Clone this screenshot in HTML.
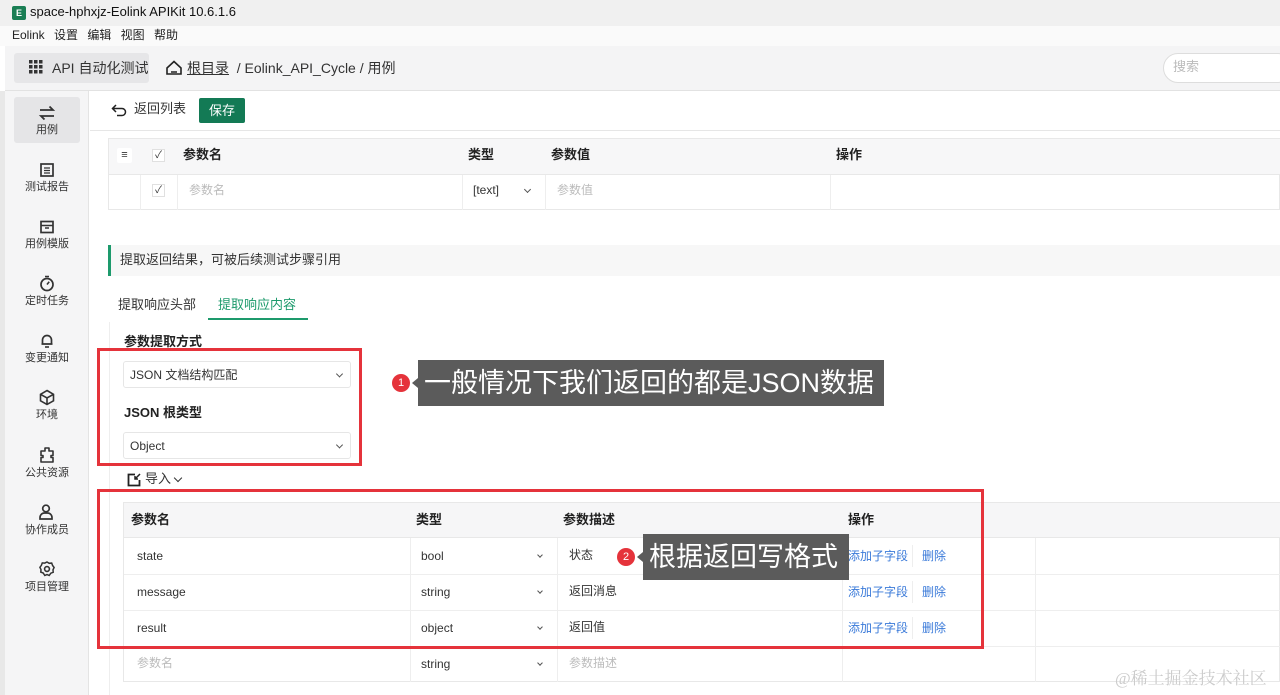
<!DOCTYPE html>
<html><head><meta charset="utf-8"><style>
*{box-sizing:border-box;margin:0;padding:0}
body{width:1280px;height:695px;overflow:hidden;font-family:"Liberation Sans","Noto Sans CJK SC",sans-serif;font-size:12px;color:#333;background:#fff;position:relative}
.a{position:absolute}
.t{white-space:nowrap;line-height:1.15}
.sel{position:absolute;border:1px solid #e6e6e6;border-radius:3px;background:#fff;font-size:12px;color:#333;padding-left:6px;display:flex;align-items:center}
.chev{position:absolute;right:8px;top:50%;width:5px;height:5px;border-right:1.2px solid #555;border-bottom:1.2px solid #555;transform:translateY(-70%) rotate(45deg)}
.nav{position:absolute;left:14px;width:66px;text-align:center;font-size:11px;color:#333;line-height:1.2}
.nav svg{display:block;margin:0 auto 3px}
.link{color:#3a7ad9}
</style></head><body>
<div class="a" style="left:0;top:0;width:1280px;height:26px;background:#f0f0f0"></div>
<div class="a" style="left:12px;top:6px;width:14px;height:14px;background:#1a7e54;border-radius:2px;color:#fff;font-size:9px;font-weight:bold;text-align:center;line-height:14px">E</div>
<div class="a t" style="left:30px;top:5px;font-size:13px;color:#111">space-hphxjz-Eolink APIKit 10.6.1.6</div>
<div class="a" style="left:0;top:26px;width:1280px;height:20px;background:#fafafa"></div>
<div class="a t" style="left:12px;top:29px;font-size:12px;color:#222;word-spacing:6px">Eolink 设置 编辑 视图 帮助</div>
<div class="a" style="left:5px;top:46px;width:1275px;height:45px;background:#f4f4f5;border-bottom:1px solid #e2e2e2"></div>
<div class="a" style="left:14px;top:53px;width:135px;height:30px;background:#e6e6e8;border-radius:3px"></div>
<svg class="a" style="left:29px;top:60px" width="14" height="14"><g fill="#333"><rect x="0" y="0" width="3.5" height="3.5"/><rect x="5" y="0" width="3.5" height="3.5"/><rect x="10" y="0" width="3.5" height="3.5"/><rect x="0" y="5" width="3.5" height="3.5"/><rect x="5" y="5" width="3.5" height="3.5"/><rect x="10" y="5" width="3.5" height="3.5"/><rect x="0" y="10" width="3.5" height="3.5"/><rect x="5" y="10" width="3.5" height="3.5"/><rect x="10" y="10" width="3.5" height="3.5"/></g></svg>
<div class="a t" style="left:52px;top:60px;font-size:14px;color:#333">API 自动化测试</div>
<svg class="a" style="left:166px;top:60px" width="16" height="15"><path d="M1 8 L8 1.5 L15 8 V14 H1 Z" fill="none" stroke="#222" stroke-width="1.6"/><path d="M5 12h6" stroke="#222" stroke-width="1.5"/></svg>
<div class="a t" style="left:187px;top:60px;font-size:14px;color:#333"><u>根目录</u>&nbsp; / Eolink_API_Cycle / 用例</div>
<div class="a" style="left:1163px;top:53px;width:130px;height:30px;border:1px solid #ddd;border-radius:15px;background:#fff"></div>
<div class="a t" style="left:1173px;top:60px;font-size:13px;color:#bbb">搜索</div>
<div class="a" style="left:0;top:91px;width:5px;height:604px;background:#e8e8e8"></div>
<div class="a" style="left:5px;top:91px;width:84px;height:604px;background:#f5f5f6;border-right:1px solid #e4e4e4"></div>
<div class="a" style="left:14px;top:97px;width:66px;height:46px;background:#e5e5e7;border-radius:3px"></div>
<div class="nav" style="top:105px"><svg width="18" height="16"><path d="M2 5h13l-3.5-3.5M16 11H3l3.5 3.5" fill="none" stroke="#333" stroke-width="1.8"/></svg>用例</div>
<div class="nav" style="top:162px"><svg width="16" height="16"><rect x="2" y="2" width="12" height="12" fill="none" stroke="#333" stroke-width="1.7"/><path d="M5 6h6M5 8.5h6M5 11h6" stroke="#333" stroke-width="1.2"/></svg>测试报告</div>
<div class="nav" style="top:219px"><svg width="16" height="16"><rect x="2" y="2.5" width="12" height="11" fill="none" stroke="#333" stroke-width="1.7"/><path d="M2 6.5h12M6 9h4" stroke="#333" stroke-width="1.5"/></svg>用例模版</div>
<div class="nav" style="top:275px"><svg width="16" height="17"><circle cx="8" cy="9.5" r="6" fill="none" stroke="#333" stroke-width="1.7"/><path d="M8 9.5l2.2-2.7M6 1.5h4" stroke="#333" stroke-width="1.6"/></svg>定时任务</div>
<div class="nav" style="top:332px"><svg width="16" height="17"><path d="M3.5 12V8a4.5 4.5 0 0 1 9 0v4H2.5h11" fill="none" stroke="#333" stroke-width="1.7"/><path d="M6 15h4" stroke="#333" stroke-width="1.6"/></svg>变更通知</div>
<div class="nav" style="top:389px"><svg width="18" height="17"><path d="M9 1.5l6.5 3.8v6.5L9 15.5 2.5 11.8V5.3z M2.5 5.3 9 9l6.5-3.7M9 9v6.5" fill="none" stroke="#333" stroke-width="1.6"/></svg>环境</div>
<div class="nav" style="top:446px"><svg width="18" height="18"><path d="M7 2h4v3h4v4.5h-2v2h2V16H3v-4.5h2v-2H3V5h4z" fill="none" stroke="#333" stroke-width="1.6" stroke-linejoin="round"/></svg>公共资源</div>
<div class="nav" style="top:503px"><svg width="18" height="18"><circle cx="8" cy="5.5" r="3.3" fill="none" stroke="#333" stroke-width="1.7"/><path d="M2 16v-1.5a4.5 4.5 0 0 1 4.5-4.5h3a4.5 4.5 0 0 1 4.5 4.5V16z" fill="none" stroke="#333" stroke-width="1.7"/></svg>协作成员</div>
<div class="nav" style="top:560px"><svg width="18" height="18"><circle cx="9" cy="9" r="2.4" fill="none" stroke="#333" stroke-width="1.6"/><path d="M9 2l2.2 1.3 2.5-.2.9 2.4 1.5 2-1.1 2.3.2 2.5-2.4.9L11.2 15.5 9 14.6l-2.2.9-1.6-2.5-2.4-.9.2-2.5-1.1-2.3 1.5-2 .9-2.4 2.5.2z" fill="none" stroke="#333" stroke-width="1.5"/></svg>项目管理</div>
<div class="a" style="left:90px;top:130px;width:1190px;height:1px;background:#e6e6e6"></div>
<svg class="a" style="left:111px;top:104px" width="16" height="13"><path d="M5 1L1.5 4.5 5 8M1.5 4.5H11a3.5 3.5 0 0 1 0 7H6" fill="none" stroke="#222" stroke-width="1.5"/></svg>
<div class="a t" style="left:134px;top:102px;font-size:13px;color:#333">返回列表</div>
<div class="a" style="left:199px;top:98px;width:46px;height:25px;background:#137a55;border-radius:2px;color:#fff;font-size:13px;text-align:center;line-height:25px">保存</div>
<div class="a" style="left:108px;top:138px;width:1172px;height:72px;border:1px solid #e8e8e8"></div>
<div class="a" style="left:109px;top:139px;width:1171px;height:36px;background:#f7f7f8;border-bottom:1px solid #e8e8e8"></div>
<div class="a" style="left:117px;top:148px;width:15px;height:15px;background:#fff;border-radius:2px;font-size:11px;text-align:center;line-height:14px">≡</div>
<div class="a" style="left:152px;top:149px;width:13px;height:13px;background:#fff;border:1px solid #e0e0e0;font-size:10px;text-align:center;line-height:11px">✓</div>
<div class="a t" style="left:183px;top:148px;font-size:13px;font-weight:bold;color:#222">参数名</div>
<div class="a t" style="left:468px;top:148px;font-size:13px;font-weight:bold;color:#222">类型</div>
<div class="a t" style="left:551px;top:148px;font-size:13px;font-weight:bold;color:#222">参数值</div>
<div class="a t" style="left:836px;top:148px;font-size:13px;font-weight:bold;color:#222">操作</div>
<div class="a" style="left:152px;top:184px;width:13px;height:13px;background:#fff;border:1px solid #e0e0e0;font-size:10px;text-align:center;line-height:11px">✓</div>
<div class="a" style="left:140px;top:175px;width:1px;height:35px;background:#eee"></div>
<div class="a" style="left:177px;top:175px;width:1px;height:35px;background:#eee"></div>
<div class="a" style="left:462px;top:175px;width:1px;height:35px;background:#eee"></div>
<div class="a" style="left:545px;top:175px;width:1px;height:35px;background:#eee"></div>
<div class="a" style="left:830px;top:175px;width:1px;height:35px;background:#eee"></div>
<div class="a t" style="left:189px;top:184px;color:#bbb">参数名</div>
<div class="a t" style="left:473px;top:184px;color:#333">[text]</div>
<div class="a" style="left:525px;top:187px;width:5px;height:5px;border-right:1.2px solid #555;border-bottom:1.2px solid #555;transform:rotate(45deg)"></div>
<div class="a t" style="left:557px;top:184px;color:#bbb">参数值</div>
<div class="a" style="left:108px;top:245px;width:1172px;height:31px;background:#f7f7f7;border-left:3px solid #1d9a6c"></div>
<div class="a t" style="left:120px;top:253px;font-size:13px;color:#333">提取返回结果，可被后续测试步骤引用</div>
<div class="a t" style="left:118px;top:298px;font-size:13px;color:#333">提取响应头部</div>
<div class="a t" style="left:218px;top:298px;font-size:13px;color:#1d9a6c">提取响应内容</div>
<div class="a" style="left:208px;top:318px;width:100px;height:2px;background:#1d9a6c"></div>
<div class="a" style="left:109px;top:322px;width:1px;height:373px;background:#eee"></div>
<div class="a t" style="left:124px;top:335px;font-size:13px;font-weight:bold;color:#222">参数提取方式</div>
<div class="sel" style="left:123px;top:361px;width:228px;height:27px">JSON 文档结构匹配<span class="chev"></span></div>
<div class="a t" style="left:124px;top:406px;font-size:13px;font-weight:bold;color:#222">JSON 根类型</div>
<div class="sel" style="left:123px;top:432px;width:228px;height:27px">Object<span class="chev"></span></div>
<svg class="a" style="left:127px;top:473px" width="14" height="14"><path d="M8 1.5H1.5v11h11V7" fill="none" stroke="#222" stroke-width="1.8"/><path d="M13 1l-5 5M8 3v3h3" fill="none" stroke="#222" stroke-width="1.5"/></svg>
<div class="a t" style="left:145px;top:472px;font-size:13px;color:#333">导入</div>
<div class="a" style="left:175px;top:475px;width:6px;height:6px;border-right:1.5px solid #333;border-bottom:1.5px solid #333;transform:rotate(45deg)"></div>
<div class="a" style="left:123px;top:502px;width:1157px;height:180px;border:1px solid #e8e8e8"></div>
<div class="a" style="left:124px;top:503px;width:1156px;height:35px;background:#f6f6f7;border-bottom:1px solid #e8e8e8"></div>
<div class="a t" style="left:131px;top:513px;font-size:13px;font-weight:bold;color:#222">参数名</div>
<div class="a t" style="left:416px;top:513px;font-size:13px;font-weight:bold;color:#222">类型</div>
<div class="a t" style="left:563px;top:513px;font-size:13px;font-weight:bold;color:#222">参数描述</div>
<div class="a t" style="left:848px;top:513px;font-size:13px;font-weight:bold;color:#222">操作</div>
<div class="a" style="left:124px;top:574px;width:1156px;height:1px;background:#eee"></div>
<div class="a" style="left:124px;top:610px;width:1156px;height:1px;background:#eee"></div>
<div class="a" style="left:124px;top:646px;width:1156px;height:1px;background:#eee"></div>
<div class="a" style="left:410px;top:538px;width:1px;height:144px;background:#eee"></div>
<div class="a" style="left:557px;top:538px;width:1px;height:144px;background:#eee"></div>
<div class="a" style="left:842px;top:538px;width:1px;height:144px;background:#eee"></div>
<div class="a" style="left:1035px;top:538px;width:1px;height:144px;background:#eee"></div>
<div class="a" style="left:912px;top:545px;width:1px;height:22px;background:#eee"></div>
<div class="a" style="left:912px;top:581px;width:1px;height:22px;background:#eee"></div>
<div class="a" style="left:912px;top:617px;width:1px;height:22px;background:#eee"></div>
<div class="a t" style="left:137px;top:550px">state</div>
<div class="a t" style="left:137px;top:586px">message</div>
<div class="a t" style="left:137px;top:622px">result</div>
<div class="a t" style="left:137px;top:657px;color:#bbb">参数名</div>
<div class="a t" style="left:421px;top:550px">bool</div>
<div class="a t" style="left:421px;top:586px">string</div>
<div class="a t" style="left:421px;top:622px">object</div>
<div class="a t" style="left:421px;top:658px">string</div>
<div class="a" style="left:538px;top:553px;width:4px;height:4px;border-right:1.2px solid #555;border-bottom:1.2px solid #555;transform:rotate(45deg)"></div>
<div class="a" style="left:538px;top:589px;width:4px;height:4px;border-right:1.2px solid #555;border-bottom:1.2px solid #555;transform:rotate(45deg)"></div>
<div class="a" style="left:538px;top:625px;width:4px;height:4px;border-right:1.2px solid #555;border-bottom:1.2px solid #555;transform:rotate(45deg)"></div>
<div class="a" style="left:538px;top:661px;width:4px;height:4px;border-right:1.2px solid #555;border-bottom:1.2px solid #555;transform:rotate(45deg)"></div>
<div class="a t" style="left:569px;top:549px">状态</div>
<div class="a t" style="left:569px;top:585px">返回消息</div>
<div class="a t" style="left:569px;top:621px">返回值</div>
<div class="a t" style="left:569px;top:657px;color:#bbb">参数描述</div>
<div class="a t link" style="left:848px;top:550px">添加子字段</div>
<div class="a t link" style="left:922px;top:550px">删除</div>
<div class="a t link" style="left:848px;top:586px">添加子字段</div>
<div class="a t link" style="left:922px;top:586px">删除</div>
<div class="a t link" style="left:848px;top:622px">添加子字段</div>
<div class="a t link" style="left:922px;top:622px">删除</div>
<div class="a" style="left:97px;top:348px;width:265px;height:118px;border:3px solid #e5333b"></div>
<div class="a" style="left:97px;top:489px;width:887px;height:160px;border:3px solid #e5333b"></div>
<div class="a" style="left:392px;top:374px;width:18px;height:18px;border-radius:50%;background:#e5333b;color:#fff;font-size:11px;text-align:center;line-height:18px">1</div>
<div class="a" style="left:412px;top:378px;width:0;height:0;border:5px solid transparent;border-right:6px solid #5b5b5b;border-left:0"></div>
<div class="a" style="left:418px;top:360px;width:466px;height:46px;background:#5b5b5b;color:#fff;font-size:27px;line-height:46px;padding-left:6px;white-space:nowrap">一般情况下我们返回的都是JSON数据</div>
<div class="a" style="left:617px;top:548px;width:18px;height:18px;border-radius:50%;background:#e5333b;color:#fff;font-size:11px;text-align:center;line-height:18px">2</div>
<div class="a" style="left:637px;top:552px;width:0;height:0;border:5px solid transparent;border-right:6px solid #5b5b5b;border-left:0"></div>
<div class="a" style="left:643px;top:534px;width:206px;height:46px;background:#5b5b5b;color:#fff;font-size:27px;line-height:46px;padding-left:6px;white-space:nowrap">根据返回写格式</div>
<div class="a t" style="left:1115px;top:669px;font-size:17px;color:#ccc;font-family:'Liberation Serif','Noto Serif CJK SC',serif">@稀土掘金技术社区</div>
</body></html>
